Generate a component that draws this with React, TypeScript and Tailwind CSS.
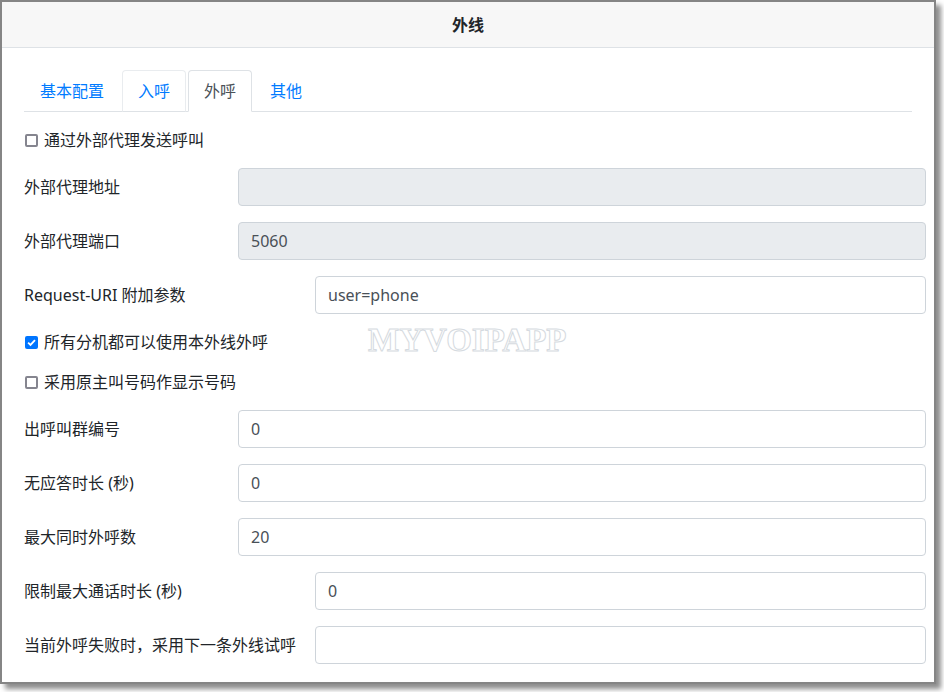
import React from "react";

const font = `font-['Segoe_UI','Noto_Sans','Noto_Sans_CJK_SC',sans-serif]`;

function CheckRow({ label, checked }: { label: string; checked?: boolean }) {
  return (
    <label className="mb-4 flex h-6 items-center text-[16px] leading-6 text-[#212529]">
      {checked ? (
        <span className="ml-[1px] flex h-[13px] w-[13px] items-center justify-center rounded-[2px] bg-[#0075ff]">
          <svg viewBox="0 0 12 12" className="h-[11px] w-[11px]">
            <path d="M2.3 6.2 L4.9 8.7 L9.8 3.4" fill="none" stroke="white" strokeWidth="2" />
          </svg>
        </span>
      ) : (
        <span className="ml-[1px] h-[13px] w-[13px] rounded-[2px] border-2 border-[#85858f] bg-white" />
      )}
      <span className="ml-[6px]">{label}</span>
    </label>
  );
}

function FieldRow({
  label,
  value = "",
  disabled,
  wide,
}: {
  label: string;
  value?: string;
  disabled?: boolean;
  wide?: boolean;
}) {
  return (
    <div className="mb-4 flex items-center">
      <div
        className={`${wide ? "w-[291px]" : "w-[214px]"} shrink-0 text-[16px] leading-6 text-[#212529]`}
      >
        {label}
      </div>
      <input
        type="text"
        defaultValue={value}
        disabled={disabled}
        className={`h-[38px] min-w-0 flex-1 rounded-[4px] border border-[#ced4da] px-[12px] text-[16px] leading-6 text-[#495057] outline-none ${
          disabled ? "bg-[#e9ecef]" : "bg-white"
        }`}
      />
    </div>
  );
}

export default function App() {
  const tabs = ["基本配置", "入呼", "外呼", "其他"];
  const active = "外呼";

  return (
    <div className={`relative h-[692px] w-[944px] overflow-hidden bg-white ${font}`}>
      <div className="flex h-[684px] w-[936px] flex-col border-2 border-[#858585] bg-white shadow-[5px_5px_5px_rgba(0,0,0,0.45)]">
        <div className="flex h-[46px] shrink-0 items-center justify-center border-b border-[#dee2e6] bg-[#f7f7f7]">
          <h1 className="text-[16px] font-bold text-[#212529]">外线</h1>
        </div>

        <div className="flex-1 pl-[22px] pr-[8px] pt-[22px]">
          <div className="mb-4 mr-[14px] flex gap-[2px] border-b border-[#dee2e6]">
            {tabs.map((t) => {
              const isActive = t === active;
              const hovered = t === "入呼";
              return (
                <div
                  key={t}
                  className={`-mb-px rounded-t-[4px] border px-[15px] py-2 text-[16px] leading-6 ${
                    isActive
                      ? "border-[#dee2e6] border-b-white bg-white text-[#495057]"
                      : hovered
                        ? "border-[#e9ecef] border-b-[#dee2e6] text-[#007bff]"
                        : "border-transparent text-[#007bff]"
                  }`}
                >
                  {t}
                </div>
              );
            })}
          </div>

          <CheckRow label="通过外部代理发送呼叫" />
          <FieldRow label="外部代理地址" disabled />
          <FieldRow label="外部代理端口" value="5060" disabled />
          <FieldRow label="Request-URI 附加参数" value="user=phone" wide />
          <CheckRow label="所有分机都可以使用本外线外呼" checked />
          <CheckRow label="采用原主叫号码作显示号码" />
          <FieldRow label="出呼叫群编号" value="0" />
          <FieldRow label="无应答时长 (秒)" value="0" />
          <FieldRow label="最大同时外呼数" value="20" />
          <FieldRow label="限制最大通话时长 (秒)" value="0" wide />
          <FieldRow label="当前外呼失败时，采用下一条外线试呼" wide />
        </div>
      </div>

      <div className="pointer-events-none absolute left-[368px] top-[324px] font-['Liberation_Serif',serif] text-[33px] font-bold leading-[33px] text-white [-webkit-text-stroke:1px_#d5dae0]">
        MYVOIPAPP
      </div>
    </div>
  );
}
